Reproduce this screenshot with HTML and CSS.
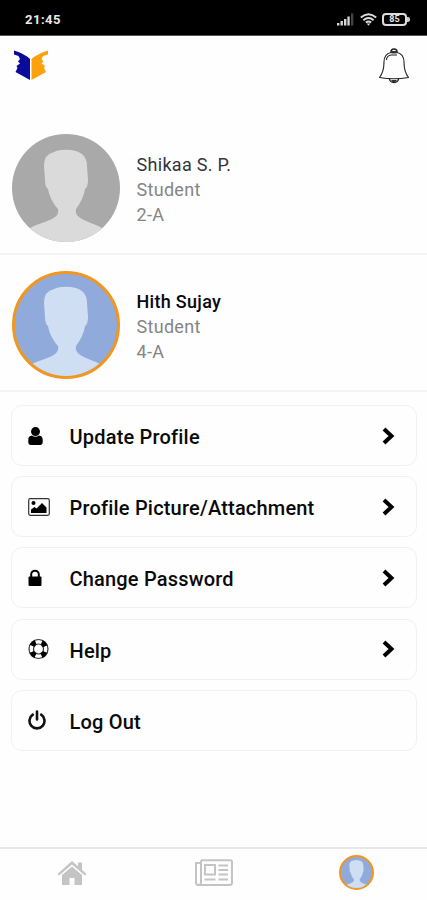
FILE: index.html
```html
<!DOCTYPE html>
<html lang="en">
<head>
    <meta charset="UTF-8">
    <meta name="viewport" content="width=device-width, initial-scale=1.0">
    <title>Profile</title>
    <link rel="stylesheet" href="styles.css">
</head>
<body>
    <!-- shared shapes -->
    <svg class="defs" width="0" height="0">
        <symbol id="person" viewBox="0 0 108 108">
            <path d="M0 108V101L18 94C27 89 38 87 43 83Q47 80 46 75C40 68 37 61 36 55Q33 53 33 46L32 32Q32 20 42 18Q48 15 59 16Q75 18 75 32L76 46Q76 53 73 55C72 62 69 68 64 75Q63 80 67 83C72 87 81 89 90 94L108 101V108Z" fill="currentColor"/>
        </symbol>
        <symbol id="chevron" viewBox="0 0 14 18">
            <path d="M2 2L9.5 9L2 16" fill="none" stroke="#000" stroke-width="4"/>
        </symbol>
    </svg>

    <div class="status">
        <span class="time">21:45</span>
        <div class="status-icons">
            <svg width="17" height="13" viewBox="0 0 17 13">
                <path d="M0 10h2.4v2.5H0zM3.5 8h2.4v4.5H3.5zM7 6h2.4v6.5H7zM10.4 3.5h2.3v9h-2.3z" fill="#d8d8d8"/>
                <path d="M14 .5h2.3v12H14z" fill="#444"/>
            </svg>
            <svg width="17" height="13" viewBox="0 0 17 13">
                <g fill="none" stroke="#ddd" stroke-width="1.9">
                    <path d="M.8 4.5Q8.5-2 16.2 4.5M3.4 7.2Q8.5 3 13.6 7.2M5.8 9.5Q8.5 7.4 11.2 9.5"/>
                </g>
                <path d="M6.7 10.5h3.6L8.5 12.8z" fill="#ddd"/>
            </svg>
            <div class="battery">85</div>
        </div>
    </div>

    <header class="header">
        <svg width="36" height="32" viewBox="0 0 36 32">
            <path d="M1 .5Q12 4 17 9V30L2.5 22L4.5 18L3.5 16L7 13.5L5 11.5L7 9L5.5 6L1 4.5Z" fill="#0a0a9c"/>
            <path d="M35 .5Q24 4 18.5 9V30L33 22L31 18L32 16L28.5 13.5L30.5 11.5L28.5 9L30 6L35 4.5Z" fill="#fda20c"/>
        </svg>
        <svg width="32" height="36" viewBox="0 0 32 36">
            <g fill="none" stroke="#222" stroke-width="1.1" stroke-linejoin="round">
                <path d="M13 4.5C8 5.5 6 9 6 14C6 21 5 25 1.5 29.5Q16 32 30.5 29.5C27 25 26 21 26 14C26 9 24 5.5 19 4.5Q16 3.7 13 4.5Z"/>
                <path d="M13 4Q13 1 16 1T19 4" stroke-width="1.5"/>
                <path d="M8.5 12Q8.5 8 13 7H19"/>
                <path d="M11.5 31Q12 34.5 16 34.5T20.5 31" stroke-width="1.4"/>
            </g>
            <path d="M12 4.5L13.5 3H18.5L20 4.5L18 5.5H14zM13 32H19L17.5 34H14.5z" fill="#333"/>
        </svg>
    </header>

    <div class="student">
        <div class="avatar"><svg><use href="#person"/></svg></div>
        <div class="info">
            <div class="name">Shikaa S. P.</div>
            <div>Student</div>
            <div>2-A</div>
        </div>
    </div>
    <div class="student">
        <div class="avatar active"><svg><use href="#person"/></svg></div>
        <div class="info">
            <div class="name selected">Hith Sujay</div>
            <div>Student</div>
            <div>4-A</div>
        </div>
    </div>

    <div class="menu">
        <div class="item">
            <svg class="icon" viewBox="0 0 22 22">
                <path d="M3 20Q.3 20 .3 17V14.5Q.3 11 4 10.5Q7.5 13 11 10.5Q14.7 11 14.7 14.5V17Q14.7 20 12 20Z"/>
                <ellipse cx="7.5" cy="6.6" rx="4.5" ry="4.5"/>
            </svg>
            <span class="label">Update Profile</span>
            <svg class="arrow"><use href="#chevron"/></svg>
        </div>
        <div class="item">
            <svg class="icon" viewBox="0 0 22 22">
                <rect x=".7" y="2.7" width="20.6" height="16.6" rx="1.5" fill="none" stroke="#333" stroke-width="1.2"/>
                <circle cx="5.5" cy="7" r="2"/>
                <path d="M3 17V13.5L6.5 11L8.5 12.5L14 7L18.5 11.5V17Z"/>
            </svg>
            <span class="label">Profile Picture/Attachment</span>
            <svg class="arrow"><use href="#chevron"/></svg>
        </div>
        <div class="item">
            <svg class="icon" viewBox="0 0 22 22">
                <rect x=".5" y="9.5" width="13" height="9.5" rx="1"/>
                <path d="M3.2 10V7.5A3.8 3.8 0 0 1 10.8 7.5V10" fill="none" stroke="#000" stroke-width="2"/>
            </svg>
            <span class="label">Change Password</span>
            <svg class="arrow"><use href="#chevron"/></svg>
        </div>
        <div class="item">
            <svg class="icon" viewBox="0 0 22 22">
                <circle cx="10.5" cy="11" r="9.5" fill="none" stroke="#333" stroke-width="1.2"/>
                <circle cx="10.5" cy="11" r="5" fill="none" stroke="#333" stroke-width="1.2"/>
                <circle cx="10.5" cy="11" r="7.3" fill="none" stroke="#000" stroke-width="4.8" stroke-dasharray="5.2 6.267" stroke-dashoffset="-3.13"/>
            </svg>
            <span class="label">Help</span>
            <svg class="arrow"><use href="#chevron"/></svg>
        </div>
        <div class="item">
            <svg class="icon" viewBox="0 0 22 22">
                <path d="M4.8 5.7A7.5 7.5 0 1 0 13.2 5.7M9 2.5V10.5" fill="none" stroke="#111" stroke-width="2.6" stroke-linecap="round"/>
            </svg>
            <span class="label">Log Out</span>
        </div>
    </div>

    <nav class="tabs">
        <div class="tab">
            <svg width="30" height="26" viewBox="0 0 30 26">
                <path d="M15 1L21 6.3V2.5H25V10L29.5 14L28 15.5L15 4.5L2 15.5L.5 14Z" fill="#c4c4c4"/>
                <path d="M15 6.5L25 15V25H17.5V18H12.5V25H5V15Z" fill="#c4c4c4"/>
            </svg>
        </div>
        <div class="tab">
            <svg width="38" height="27" viewBox="0 0 38 27">
                <g fill="none" stroke="#c4c4c4" stroke-width="2">
                    <path d="M6 1.2H35.5Q37 1.2 37 3V23.5Q37 26 34.5 26H3.5Q1 26 1 23.5V4H6M6 1.2V23.5Q6 26 3.5 26"/>
                    <rect x="10" y="6" width="10" height="9.5"/>
                    <path d="M23.5 6.5H33M23.5 11H33M23.5 15.5H33M9.5 20.5H20.5M23.5 20.5H33"/>
                </g>
            </svg>
        </div>
        <div class="tab">
            <div class="avatar active small"><svg><use href="#person"/></svg></div>
        </div>
    </nav>
</body>
</html>
```
FILE: styles.css
```css
* {
    box-sizing: border-box;
}
body {
    margin: 0;
    height: 900px;
    display: flex;
    flex-direction: column;
    overflow: hidden;
    background-color: #fefefe;
    font-family: Roboto, sans-serif;
}
svg {
    display: block;
    flex: none;
}
.defs {
    position: absolute;
}
.status {
    height: 36px;
    flex: none;
    display: flex;
    align-items: center;
    justify-content: space-between;
    padding: 3px 17px 0 25px;
    background-color: #000;
    border-bottom: 1px solid #555;
    color: #e8e8e8;
}
.time {
    font-size: 13px;
    font-weight: 700;
    letter-spacing: 0.5px;
}
.status-icons {
    display: flex;
    align-items: center;
    gap: 6px;
}
.battery {
    position: relative;
    width: 25px;
    height: 13px;
    margin: 0 3px 0 -1px;
    border: 2px solid #ddd;
    border-radius: 4px;
    font-size: 9px;
    line-height: 9px;
    font-weight: 700;
    text-align: center;
}
.battery::after {
    content: "";
    position: absolute;
    right: -5px;
    top: 2px;
    width: 3px;
    height: 5px;
    background-color: #ccc;
    border-radius: 0 2px 2px 0;
}
.header {
    height: 82px;
    flex: none;
    display: flex;
    justify-content: space-between;
    padding: 12px 17px 0 13px;
}
.header svg:first-child {
    margin-top: 2px;
}
.student {
    height: 137px;
    flex: none;
    display: flex;
    align-items: center;
    gap: 16.5px;
    padding: 5px 12px 0 12px;
    border-bottom: 2px solid #f4f4f4;
}
.avatar {
    width: 108px;
    height: 108px;
    flex: none;
    border-radius: 50%;
    overflow: hidden;
    background-color: #a9a9a9;
    color: #dadada;
}
.avatar svg {
    width: 100%;
    height: 100%;
}
.avatar.active {
    border: 3px solid #f1961f;
    background-color: #90abdb;
    color: #cfdef3;
}
.avatar.active svg {
    width: 108px;
    height: 108px;
    margin: -3px;
}
.avatar.small {
    width: 35px;
    height: 35px;
    border-width: 2px;
}
.avatar.active.small svg {
    width: 35px;
    height: 35px;
    margin: -2px;
}
.info {
    font-size: 18px;
    line-height: 25px;
    letter-spacing: 0.3px;
    color: #858585;
    padding-top: 2px;
}
.name {
    color: #34343c;
}
.name.selected {
    color: #08080f;
    font-weight: 500;
}
.menu {
    display: flex;
    flex-direction: column;
    gap: 10.2px;
    padding: 13px 10px 0 11px;
}
.item {
    height: 61px;
    display: flex;
    align-items: center;
    padding: 0 20px 0 16px;
    border: 1.5px solid #f1f1f1;
    border-radius: 11px;
}
.icon {
    width: 22px;
    height: 22px;
    margin-right: 19.5px;
}
.label {
    flex: 1;
    font-size: 20px;
    font-weight: 500;
    letter-spacing: 0.19px;
    color: #0a0a0a;
    padding-top: 3px;
}
.arrow {
    width: 14px;
    height: 18px;
}
.tabs {
    height: 53px;
    flex: none;
    margin-top: auto;
    display: flex;
    padding: 0 0 4px 1px;
    border-top: 2px solid #e8e8e8;
}
.tab {
    flex: 1;
    display: flex;
    align-items: center;
    justify-content: center;
}
```
